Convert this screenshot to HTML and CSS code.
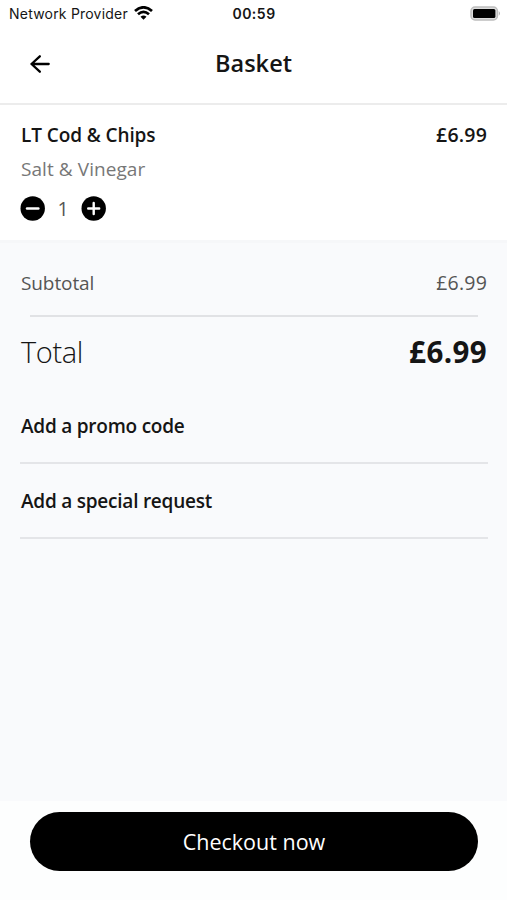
FILE: index.html
```html
<!DOCTYPE html>
<html lang="en">
<head>
<meta charset="utf-8">
<title>Basket</title>
<link rel="stylesheet" href="styles.css">
</head>
<body>
<div class="app">
  <div class="status">
    <div class="carrier"><span class="provider">Network Provider</span>
      <svg class="wifi" width="19" height="14" viewBox="0 0 19 14" fill="none" stroke="#000" stroke-width="2.7"><path d="M1 5.1Q9.5-2.5 18 5.1M4 8.3Q9.5 3.4 15 8.3"/><path d="M6.5 10.7Q9.5 8.2 12.5 10.7L9.5 13.7Z" fill="#000" stroke="none"/></svg>
    </div>
    <span class="clock">00:59</span>
    <svg class="battery" width="31" height="15" viewBox="0 0 31 15"><rect x="1" y="1" width="26.4" height="13" rx="4" fill="#ddd" stroke="#bdbdbd" stroke-width="1.5"/><rect x="3" y="3" width="22.4" height="9" rx="1.5"/><path d="M28.8 5q2.2 2.4 0 4.8z" fill="#aaa"/></svg>
  </div>
  <header class="header">
    <svg class="back" width="20" height="18" viewBox="0 0 20 18" fill="none" stroke="#000" stroke-width="2.3" stroke-linecap="round" stroke-linejoin="round"><path d="M18.7 9H1.5M9.8 1.3L1.5 9l8.3 7.7"/></svg>
    <h1 class="title">Basket</h1>
  </header>
  <section class="item">
    <div class="row strong"><span class="name">LT Cod &amp; Chips</span><span class="price">£6.99</span></div>
    <div class="option"><span>Salt &amp; Vinegar</span></div>
    <div class="stepper">
      <svg width="25" height="25" viewBox="0 0 25 25"><circle cx="12.7" cy="12.5" r="12.2"/><path d="M7 12.5h11.4" stroke="#fff" stroke-width="2.4" stroke-linecap="round"/></svg>
      <span class="count">1</span>
      <svg width="25" height="25" viewBox="0 0 25 25"><circle cx="12.7" cy="12.5" r="12.2"/><path d="M7.2 12.5h11M12.7 7v11" stroke="#fff" stroke-width="2.4" stroke-linecap="round"/></svg>
    </div>
  </section>
  <main class="summary">
    <div class="row subtotal"><span class="sublabel">Subtotal</span><span class="price">£6.99</span></div>
    <div class="row total"><span class="total-label">Total</span><span class="total-price">£6.99</span></div>
    <div class="link"><span class="promo">Add a promo code</span></div>
    <div class="link"><span class="request">Add a special request</span></div>
  </main>
  <footer class="footer"><button class="checkout"><span>Checkout now</span></button></footer>
</div>
</body>
</html>
```
FILE: styles.css
```css
* { box-sizing: border-box; }
body { margin: 0; background: #fff; color: #151515; font: 19px/26px "Open Sans", "Noto Sans", sans-serif; }
.app { width: 507px; height: 900px; display: flex; flex-direction: column; overflow: hidden; }
.status { height: 27px; padding: 0 6px 0 9px; display: grid; grid-template-columns: 1fr auto 1fr; align-items: center; font-family: Inter, sans-serif; font-size: 14px; }
.carrier { display: flex; align-items: center; gap: 6px; }
.wifi { margin-top: -1px; }
.provider { letter-spacing: .21px; }
.clock { font-weight: 600; letter-spacing: .5px; margin-left: -2px; }
.battery { justify-self: end; }
.header { height: 78px; padding: 0 30px; display: grid; grid-template-columns: 20px 1fr 20px; align-items: center; padding-bottom: 3px; border-bottom: 2px solid #ececec; }
.back { margin-top: 1px; }
.title { margin: -2px 0 0; text-align: center; font-size: 23.5px; font-weight: 620; letter-spacing: .05px; }
.item { height: 135px; padding: 17px 20px 0 20px; background: #fff; }
.row { display: flex; justify-content: space-between; align-items: center; padding-left: 1px; }
.strong { font-weight: 550; }
.price { font-size: 19.5px; letter-spacing: .2px; }
.name { letter-spacing: -.1px; }
.option { margin-top: 8px; padding-left: 1px; color: #777; letter-spacing: .07px; }
.stepper { margin-top: 14px; display: flex; align-items: center; width: 86px; height: 25px; justify-content: space-between; color: #555; }
.count { font-size: 19.5px; }
.summary { flex: 1; padding: 18px 19px 0 20px; background: #f9fafc; border-top: 3px solid #f6f7f9; }
.subtotal { height: 44px; padding-right: 1px; color: #555; }
.sublabel { letter-spacing: -.1px; }
.total { height: 74px; margin-top: 10px; padding-right: 1px; position: relative; }
.total::before { content: ""; position: absolute; left: 10px; right: 10px; top: 0; height: 2px; background: #e1e2e5; }
.total-label { font-size: 29px; font-weight: 320; letter-spacing: -.4px; }
.total-price { font-size: 29.5px; font-weight: 670; letter-spacing: .4px; }
.link { height: 75px; display: flex; align-items: center; padding: 1px 0 0 1px; font-weight: 560; border-bottom: 2px solid #e4e5e8; }
.promo, .request { letter-spacing: -.23px; }
.footer { height: 99px; padding: 11px 29px 0 30px; background: #fdfefe; }
.checkout { display: block; width: 100%; height: 59px; padding: 0; border: 0; border-radius: 30px; background: #000; color: #fff; font: 450 21.5px/58px "Open Sans", sans-serif; }
```
